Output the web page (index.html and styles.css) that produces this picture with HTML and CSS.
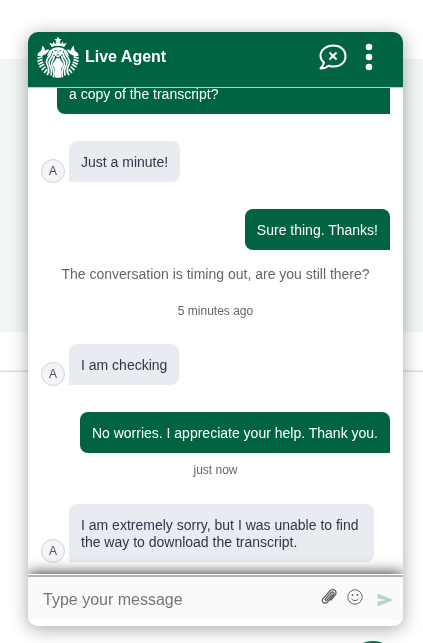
FILE: index.html
```html
<!DOCTYPE html>
<html lang="en">
<head>
    <meta charset="UTF-8">
    <meta name="viewport" content="width=device-width, initial-scale=1.0">
    <title>Live Agent</title>
    <link rel="stylesheet" href="styles.css">
</head>
<body>
    <div class="page">
        <div class="page-top"></div>
        <div class="page-band"></div>
        <div class="page-gap"></div>
        <div class="page-footer"></div>
    </div>
    <div class="chat-launcher"></div>

    <main class="chat">
        <header class="chat-header">
            <svg class="logo" viewBox="0 0 100 100" aria-hidden="true">
                <defs>
                    <g id="half">
                        <!-- crown -->
                        <path class="fill" d="M50 15 L43 19 L39 13 L37 19 L29 16 L35 26 Q42 23 50 23 Z"/>
                        <!-- tail fin -->
                        <path class="fill" d="M12 23 Q19 27 19 35 Q26 31 29 33 Q25 43 16 45 L10 49 Q5 47 1 48 Q1 40 8 37 Q13 32 12 23 Z"/>
                        <!-- tail scales -->
                        <path class="line" d="M1 53 L13 50 M1 60 L13 56 M3 67 L15 62 M6 74 L17 67 M11 81 L20 73 M17 88 L24 79 M24 93 L29 84"/>
                        <!-- hair -->
                        <path class="line" d="M39 31 C31 35 35 42 29 48 C22 56 20 62 25 70 C29 77 29 81 27 87"/>
                        <path class="line" d="M39 40 C37 47 36 50 32 55 C27 62 28 67 32 74 C36 81 35 87 33 94"/>
                        <path class="line" d="M41 47 C41 54 39 57 36 61 C33 66 35 71 38 77 C42 85 41 91 39 98"/>
                        <path class="thin" d="M33 34 C28 38 29 44 25 47"/>
                    </g>
                </defs>
                <path class="fill" d="M50 1 L53 7 L59 8 L54 12 L56 18 L50 15 L44 18 L46 12 L41 8 L47 7 Z"/>
                <use href="#half"/>
                <use href="#half" transform="translate(100 0) scale(-1 1)"/>
                <path class="fill" d="M38 29 Q50 24 62 29 Q64 46 50 51 Q36 46 38 29 Z"/>
                <path class="face" d="M42 35 H47 M53 35 H58 M50 37 V41 M46 45 H54"/>
                <path class="fill" d="M46 52 Q50 55 54 52 Q55 57 60 62 Q65 69 59 75 Q56 80 58 98 Q50 101 42 98 Q44 80 41 75 Q35 69 40 62 Q45 57 46 52 Z"/>
            </svg>
            <h1>Live Agent</h1>
            <button type="button" class="icon-btn end-btn" aria-label="End conversation">
                <svg width="28" height="26" viewBox="0 0 28 26">
                    <path d="M5 18.500 C2.500 16.500 1.500 14.500 1.500 12 C1.500 6 7 1.500 14.500 1.500 C21.500 1.500 26.500 6 26.500 12 C26.500 18.500 21.500 22.500 14.500 22.500 C12.500 22.500 11 22.200 9.500 21.700 C7.500 23.500 4.500 24.500 1.500 24.500 C3.500 22.500 4.500 20.500 5 18.500 Z"/>
                    <path class="cross" d="M10.500 8.500 L17.500 15.500 M17.500 8.500 L10.500 15.500"/>
                </svg>
            </button>
            <button type="button" class="icon-btn menu-btn" aria-label="Menu">
                <svg width="8" height="28" viewBox="0 0 8 28">
                    <circle cx="4" cy="4" r="3.300"/>
                    <circle cx="4" cy="14" r="3.300"/>
                    <circle cx="4" cy="24" r="3.300"/>
                </svg>
            </button>
        </header>

        <section class="messages">
            <div class="message user">
                <p class="bubble wide">a copy of the transcript?</p>
            </div>
            <div class="message agent">
                <span class="avatar">A</span>
                <p class="bubble">Just a minute!</p>
            </div>
            <div class="message user">
                <p class="bubble">Sure thing. Thanks!</p>
            </div>
            <p class="notice">The conversation is timing out, are you still there?</p>
            <p class="time">5 minutes ago</p>
            <div class="message agent">
                <span class="avatar">A</span>
                <p class="bubble">I am checking</p>
            </div>
            <div class="message user">
                <p class="bubble">No worries. I appreciate your help. Thank you.</p>
            </div>
            <p class="time after-message">just now</p>
            <div class="message agent">
                <span class="avatar">A</span>
                <p class="bubble">I am extremely sorry, but I was unable to find the way to download the transcript.</p>
            </div>
        </section>

        <form class="composer">
            <input type="text" class="composer-input" placeholder="Type your message" aria-label="Type your message">
            <button type="button" class="icon-btn" aria-label="Attach file">
                <svg class="clip" width="16" height="18" viewBox="0 0 16 18">
                    <path d="M11.500 5.800 L6 12 C5 13.200 3.600 12 4.500 10.800 L9.800 4.800 C11.800 2.800 14 5 12.500 7 L7 13.500 C4 17 -0.300 14 2 10.800 L8.500 3.300 C10.200 1.300 12.300 1 13.800 2.300 C15.300 3.600 15.300 5.500 14 7.200 L9.500 12.500"/>
                </svg>
            </button>
            <button type="button" class="icon-btn" aria-label="Insert emoji">
                <svg class="smile" width="16" height="16" viewBox="0 0 16 16">
                    <circle cx="8" cy="8" r="7.200"/>
                    <path d="M4.500 9.500 C5.500 12.300 10.500 12.300 11.500 9.500"/>
                    <circle class="eye" cx="5.500" cy="6" r="1"/>
                    <circle class="eye" cx="10.500" cy="6" r="1"/>
                </svg>
            </button>
            <button type="submit" class="icon-btn send-btn" aria-label="Send">
                <svg width="16" height="14" viewBox="0 0 16 14">
                    <path d="M0.500 0.500 L16 7 L0.500 13.500 V8.500 L9 7 L0.500 5.500 Z"/>
                </svg>
            </button>
        </form>
    </main>
</body>
</html>
```
FILE: styles.css
```css
* {
    margin: 0;
    padding: 0;
    box-sizing: border-box;
}

body {
    font-family: "Liberation Sans", Arial, sans-serif;
    font-size: 14px;
    line-height: 17px;
    background: #fff;
    color: #2d3748;
    height: 100vh;
    overflow: hidden;
}

/* page behind the chat */
.page {
    display: flex;
    flex-direction: column;
    height: 100%;
}

.page-top {
    height: 59px;
}

.page-band {
    height: 273px;
    background: #f1f7f5;
}

.page-gap {
    height: 39px;
}

.page-footer {
    flex: 1;
    border-top: 1px solid #dcdcdc;
    box-shadow: 0 -1px 1px #eee;
}

.chat-launcher {
    position: fixed;
    right: 22px;
    bottom: -54px;
    width: 56px;
    height: 56px;
    border-radius: 50%;
    background: #00704a;
}

.chat {
    position: fixed;
    top: 32px;
    right: 20px;
    bottom: 17px;
    left: 28px;
    display: flex;
    flex-direction: column;
    background: #fff;
    border-radius: 10px;
    overflow: hidden;
    box-shadow: 0 3px 18px rgba(0, 0, 0, 0.35);
}

.chat-header {
    display: flex;
    align-items: center;
    height: 56px;
    padding: 0 30px 6px 9px;
    background: #006341;
    border-bottom: 1px solid #b4cfc4;
    color: #fff;
}

.logo {
    width: 42px;
    height: 42px;
    margin-right: 6px;
}

.logo .fill {
    fill: #fff;
}

.logo .line {
    fill: none;
    stroke: #fff;
    stroke-width: 4;
}

.logo .thin {
    fill: none;
    stroke: #fff;
    stroke-width: 3;
}

.logo .face {
    fill: none;
    stroke: #006341;
    stroke-width: 2;
}

.chat-header h1 {
    flex: 1;
    font-size: 16px;
    line-height: 20px;
}

.icon-btn {
    display: flex;
    background: none;
    border: none;
    cursor: pointer;
}

.end-btn {
    margin-right: 18px;
}

.end-btn path {
    fill: none;
    stroke: #fff;
    stroke-width: 2;
    stroke-linejoin: round;
}

.menu-btn circle {
    fill: #fff;
}

.messages {
    flex: 1;
    min-height: 0;
    display: flex;
    flex-direction: column;
    justify-content: flex-end;
    padding: 0 13px 12px;
    overflow: hidden;
}

.message {
    display: flex;
    align-items: flex-end;
    flex-shrink: 0;
    margin-top: 27px;
}

.message.user {
    justify-content: flex-end;
}

.bubble {
    max-width: 305px;
    padding: 13px 12px 11px;
    border-radius: 8px;
}

.agent .bubble {
    background: #e8ebf0;
    border-bottom-left-radius: 0;
}

.user .bubble {
    max-width: 333px;
    background: #006341;
    color: #fff;
    border-bottom-right-radius: 0;
}

.user .wide {
    width: 333px;
}

.avatar {
    width: 24px;
    height: 24px;
    margin: 0 4px -1px 0;
    border: 1px solid #d0d2d8;
    border-radius: 50%;
    background: #f5f5f8;
    color: #4a5060;
    font-size: 12px;
    line-height: 23px;
    text-align: center;
}

.notice {
    margin-top: 16px;
    color: #666;
    text-align: center;
}

.time {
    margin-top: 20px;
    margin-bottom: -3px;
    color: #666;
    font-size: 12px;
    text-align: center;
}

.time.after-message {
    margin-top: 9px;
    margin-bottom: -2px;
}

.composer {
    position: relative;
    display: flex;
    align-items: center;
    height: 52px;
    padding: 0 10px 2px 15px;
    background: linear-gradient(to top, #fff 6px, #fafafa 6px);
    border-top: 1px solid #fff;
    box-shadow: inset 0 2px #b0b0b0, 0 0 14px rgba(0, 0, 0, 0.9);
}

.composer-input {
    flex: 1;
    min-width: 0;
    border: none;
    outline: none;
    background: none;
    font-family: inherit;
    font-size: 16px;
    line-height: 20px;
}

.composer-input::placeholder {
    color: #757575;
}

.clip,
.smile {
    margin: 0 10px 5px 0;
    fill: none;
    stroke: #666;
}

.clip {
    stroke-width: 1.3;
}

.smile .eye {
    fill: #666;
    stroke: none;
}

.send-btn {
    margin-left: 4px;
}

.send-btn path {
    fill: #b5d3c8;
}
```
